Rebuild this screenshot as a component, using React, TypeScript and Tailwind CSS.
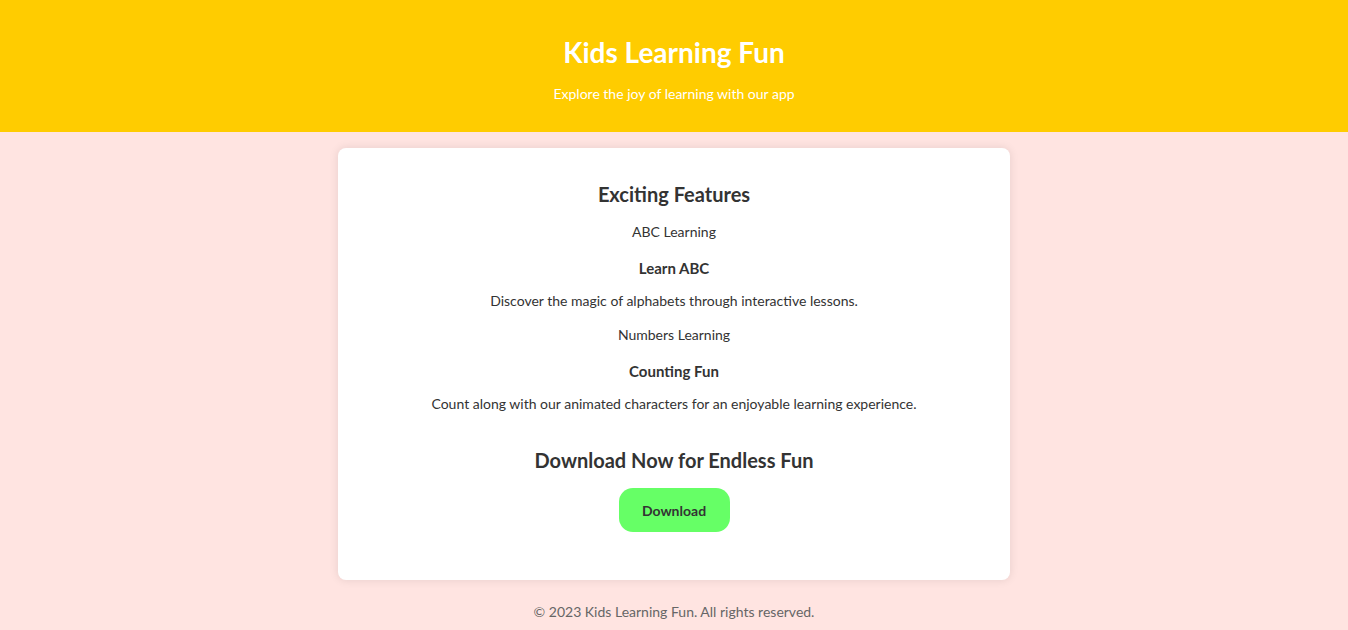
import React from "react";

const features = [
  { label: "ABC Learning", title: "Learn ABC", text: "Discover the magic of alphabets through interactive lessons." },
  { label: "Numbers Learning", title: "Counting Fun", text: "Count along with our animated characters for an enjoyable learning experience." },
];

export default function App() {
  return (
    <div className="min-h-screen bg-[#ffe4e1] text-[#333333] font-['Comic_Sans_MS','Lato',sans-serif]">
      {/* header */}
      <header className="bg-[#ffcc00] h-[132px] pt-[34px] text-center text-white">
        <h1 className="text-[28px] leading-[36px] font-bold">Kids Learning Fun</h1>
        <p className="mt-[14px] text-[14px] leading-[20px]">Explore the joy of learning with our app</p>
      </header>

      {/* card */}
      <main className="w-[672px] mx-auto mt-4 bg-white rounded-lg shadow-[0_0_10px_rgba(0,0,0,0.1)] pt-8 pb-12 text-center">
        <h2 className="text-[20px] leading-[28px] font-bold">Exciting Features</h2>
        {features.map((f) => (
          <div key={f.label} className="mt-[14px]">
            <p className="text-[14px] leading-[20px]">{f.label}</p>
            <h3 className="mt-4 text-[15px] leading-[20px] font-bold">{f.title}</h3>
            <p className="mt-[13px] text-[14px] leading-[20px]">{f.text}</p>
          </div>
        ))}
        <h2 className="mt-8 text-[20px] leading-[28px] font-bold">Download Now for Endless Fun</h2>
        <button className="mt-[14px] w-[111px] h-[44px] rounded-[14px] bg-[#66ff66] text-[14px] font-bold text-[#333333]">
          Download
        </button>
      </main>

      {/* footer */}
      <footer className="pt-[22px] pb-2 text-center text-[14px] leading-[20px] text-[#666666]">
        © 2023 Kids Learning Fun. All rights reserved.
      </footer>
    </div>
  );
}
